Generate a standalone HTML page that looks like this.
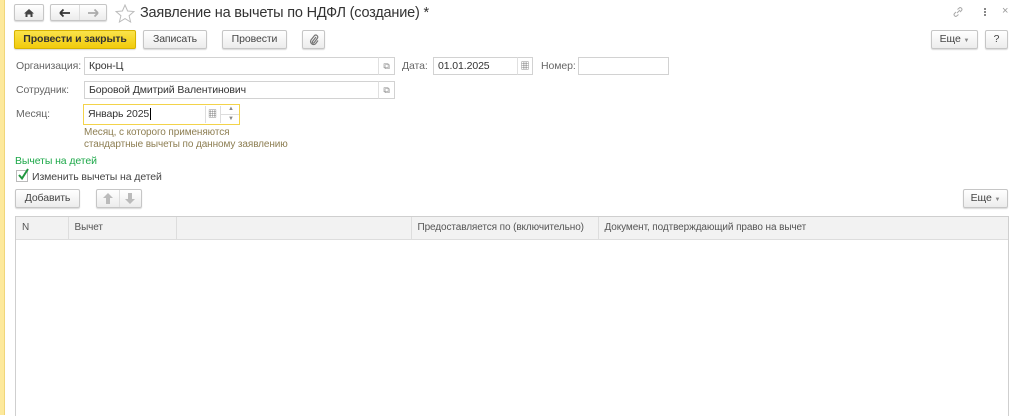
<!DOCTYPE html>
<html><head><meta charset="utf-8"><style>
*{box-sizing:border-box;margin:0;padding:0}
body{width:1023px;height:415px;overflow:hidden;background:#fff;font-family:"Liberation Sans","Noto Sans CJK SC",sans-serif;font-size:10.5px;color:#444;position:relative;letter-spacing:-0.1px}
.a{position:absolute;white-space:nowrap}
.btn{position:absolute;border:1px solid #c6c6c6;border-radius:2px;background:linear-gradient(#fff,#ececec);box-shadow:0 1px 1px rgba(0,0,0,.15);text-align:center;color:#444;font-size:10.5px;white-space:nowrap}
.fld{position:absolute;border:1px solid #d2d2d2;background:#fff;height:18px;padding:2px 4px;color:#333;font-size:10.5px;white-space:nowrap}
.lbl{position:absolute;color:#666;font-size:10.5px;white-space:nowrap}
.ib{position:absolute;border:1px solid #d2d2d2;border-left:1px solid #e0e0e0;background:#fff;height:18px}
th{font-weight:normal;text-align:left;color:#555;font-size:10px;padding-left:6px;border-right:1px solid #ddd;height:22px;white-space:nowrap}
</style></head><body>
<div class="a" style="left:0;top:0;width:5px;height:415px;background:#fde99c;border-right:1px solid #f0d67a"></div>

<div class="btn" style="left:14px;top:4px;width:30px;height:17px;"><svg width="12" height="12" viewBox="0 0 12 12" style="margin-top:2px"><path d="M1 6.5L6 2l5 4.5H9.5V10h-2V7.5h-3V10h-2V6.5z" fill="#444"/></svg></div>
<div class="btn" style="left:50px;top:4px;width:57px;height:17px;"><div class="a" style="left:28px;top:0;width:1px;height:15px;background:#ddd"></div>
<svg class="a" style="left:8px;top:3px" width="12" height="10" viewBox="0 0 12 10"><path d="M1 5h10M1 5l3.5-3.5M1 5l3.5 3.5" stroke="#333" stroke-width="1.8" fill="none"/></svg>
<svg class="a" style="left:36px;top:3px" width="12" height="10" viewBox="0 0 12 10"><path d="M1 5h10M11 5L7.5 1.5M11 5L7.5 8.5" stroke="#aaa" stroke-width="1.8" fill="none"/></svg></div>
<svg class="a" style="left:115px;top:4px" width="20" height="19" viewBox="0 0 20 19"><path d="M10 1l2.6 6 6.4.5-4.9 4.2 1.5 6.3L10 14.6 4.4 18l1.5-6.3L1 7.5l6.4-.5z" fill="none" stroke="#bbb" stroke-width="1"/></svg>
<div class="a" style="left:140px;top:5px;font-size:14.5px;color:#333;letter-spacing:-0.2px">Заявление на вычеты по НДФЛ (создание) *</div>
<svg class="a" style="left:952px;top:6px" width="12" height="12" viewBox="0 0 12 12"><path d="M5 7l3-3M4 6L2.5 7.5a1.7 1.7 0 0 0 2.4 2.4L6.5 8.5M8 6l1.5-1.5a1.7 1.7 0 0 0-2.4-2.4L5.5 3.5" stroke="#aaa" fill="none"/></svg>
<div class="a" style="left:984px;top:8px;width:2px;height:2px;background:#888"></div>
<div class="a" style="left:984px;top:11px;width:2px;height:2px;background:#888"></div>
<div class="a" style="left:984px;top:14px;width:2px;height:2px;background:#888"></div>
<div class="a" style="left:1002px;top:5px;color:#999;font-size:11px">×</div>

<div class="btn" style="left:14px;top:30px;width:122px;height:19px;background:linear-gradient(#fbe34a,#f1cb0c);border-color:#d7b300;font-weight:bold;color:#333;line-height:17px">Провести и закрыть</div>
<div class="btn" style="left:143px;top:30px;width:64px;height:19px;line-height:17px">Записать</div>
<div class="btn" style="left:222px;top:30px;width:65px;height:19px;line-height:17px">Провести</div>
<div class="btn" style="left:302px;top:30px;width:23px;height:19px;line-height:17px;color:#777">
<svg width="10" height="12" viewBox="0 0 10 12" style="margin-top:3px"><path d="M7 3L3.5 7.5a1 1 0 0 0 1.5 1.3L8.5 4a2 2 0 0 0-3-2.5L2 6a3 3 0 0 0 4.5 3.8L9 6.5" stroke="#777" stroke-width="1.2" fill="none"/></svg></div>
<div class="btn" style="left:931px;top:30px;width:47px;height:19px;line-height:17px">Еще <span style="font-size:6px;color:#888">▼</span></div>
<div class="btn" style="left:985px;top:30px;width:23px;height:19px;line-height:17px">?</div>

<div class="lbl" style="left:16px;top:60px">Организация:</div>
<div class="fld" style="left:84px;top:57px;width:295px">Крон-Ц</div>
<div class="ib" style="left:378px;top:57px;width:17px;color:#888;font-size:9px;text-align:center;line-height:16px">⧉</div>
<div class="lbl" style="left:402px;top:60px">Дата:</div>
<div class="fld" style="left:433px;top:57px;width:85px">01.01.2025</div>
<div class="ib" style="left:517px;top:57px;width:16px;color:#666;font-size:9px;text-align:center;line-height:16px">▦</div>
<div class="lbl" style="left:541px;top:60px">Номер:</div>
<div class="fld" style="left:578px;top:57px;width:91px"></div>

<div class="lbl" style="left:16px;top:84px">Сотрудник:</div>
<div class="fld" style="left:84px;top:81px;width:295px">Боровой Дмитрий Валентинович</div>
<div class="ib" style="left:378px;top:81px;width:17px;color:#888;font-size:9px;text-align:center;line-height:16px">⧉</div>

<div class="lbl" style="left:16px;top:108px">Месяц:</div>
<div class="fld" style="left:83px;top:104px;width:157px;height:21px;border:1px solid #f3d34a;padding-top:3px">Январь 2025<span style="border-left:1px solid #000;margin-left:1px"></span></div>
<div class="a" style="left:205px;top:106px;width:1px;height:17px;background:#ddd"></div>
<div class="a" style="left:208px;top:107px;color:#666;font-size:9px">▦</div>
<div class="a" style="left:220px;top:106px;width:1px;height:17px;background:#ddd"></div>
<div class="a" style="left:221px;top:114px;width:18px;height:1px;background:#ddd"></div>
<div class="a" style="left:228px;top:106px;color:#888;font-size:6px">▲</div>
<div class="a" style="left:228px;top:116px;color:#888;font-size:6px">▼</div>

<div class="a" style="left:84px;top:127px;color:#8d7e52;font-size:10px;line-height:12px">Месяц, с которого применяются<br>стандартные вычеты по данному заявлению</div>
<div class="a" style="left:15px;top:155px;color:#1da849;font-size:10.5px">Вычеты на детей</div>
<div class="a" style="left:16px;top:170px;width:12px;height:12px;border:1px solid #bbb;background:#fff"></div>
<svg class="a" style="left:17px;top:168px" width="12" height="13"><path d="M2 7l3 3.5L11 1" stroke="#21963e" stroke-width="2" fill="none"/></svg>
<div class="a" style="left:32px;top:171px;color:#444">Изменить вычеты на детей</div>

<div class="btn" style="left:15px;top:189px;width:65px;height:19px;line-height:17px">Добавить</div>
<div class="btn" style="left:96px;top:189px;width:46px;height:19px;color:#bbb;line-height:17px"><div class="a" style="left:22px;top:0;width:1px;height:17px;background:#ddd"></div>
<svg class="a" style="left:6px;top:3px" width="10" height="11" viewBox="0 0 10 11"><path d="M5 0L0 5h3v6h4V5h3z" fill="#bbb"/></svg>
<svg class="a" style="left:28px;top:3px" width="10" height="11" viewBox="0 0 10 11"><path d="M5 11L0 6h3V0h4v6h3z" fill="#bbb"/></svg></div>
<div class="btn" style="left:963px;top:189px;width:45px;height:19px;line-height:17px">Еще <span style="font-size:6px;color:#888">▼</span></div>

<div class="a" style="left:15px;top:216px;width:994px;height:200px;border:1px solid #cfcfcf;border-bottom:none">
<table style="border-collapse:collapse;width:100%;table-layout:fixed;background:#f2f2f2;border-bottom:1px solid #ddd"><tr>
<th style="width:52px">N</th><th style="width:108px">Вычет</th><th style="width:235px"></th><th style="width:187px">Предоставляется по (включительно)</th><th style="border-right:none">Документ, подтверждающий право на вычет</th></tr></table>
</div>
</body></html>
